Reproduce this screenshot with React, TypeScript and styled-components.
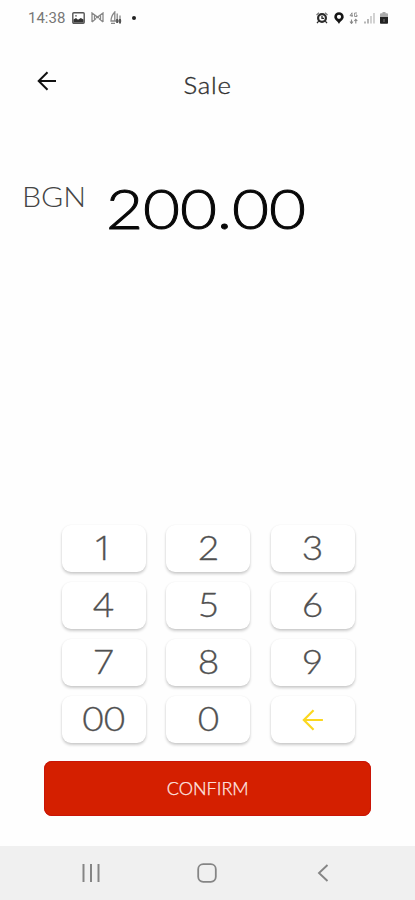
import React from 'react';
import styled, { createGlobalStyle } from 'styled-components';

const GlobalStyle = createGlobalStyle`
  * { box-sizing: border-box; }
  body { margin: 0; background: #fefefe; }
  button { border: 0; padding: 0; margin: 0; background: none; font: inherit; color: inherit; }
  svg { display: block; flex: none; }
`;

const Screen = styled.div`
  width: 415px;
  height: 900px;
  display: flex;
  flex-direction: column;
  background: #fefefe;
  font-family: Lato, 'Open Sans', sans-serif;
  overflow: hidden;
`;

const StatusBar = styled.header`
  height: 35px;
  flex: none;
  display: flex;
  align-items: center;
  justify-content: space-between;
  padding: 0 27px 0 28px;
  color: #555;
`;

const StatusGroup = styled.div<{ $gap: number }>`
  display: flex;
  align-items: center;
  gap: ${(p) => p.$gap}px;
`;

const Clock = styled.span`
  width: 38px;
  font: 400 15px/18px Roboto, sans-serif;
  color: #777;
  white-space: nowrap;
`;

const TitleBar = styled.div`
  height: 100px;
  flex: none;
  display: grid;
  grid-template-columns: 94px 1fr 94px;
  justify-items: center;
`;

const BackButton = styled.button`
  width: 94px;
  height: 91px;
  display: flex;
  align-items: center;
  justify-content: center;
`;

const Title = styled.h1`
  margin: 0;
  padding-top: 36px;
  font: 300 23px/28px Lato, sans-serif;
  letter-spacing: 0.7px;
  color: #303030;
  -webkit-text-stroke: 0.35px #303030;
  transform: scaleX(1.12);
`;

const AmountRow = styled.section`
  height: 390px;
  flex: none;
  display: flex;
  padding-left: 22px;
`;

const Currency = styled.span`
  width: 84px;
  padding-top: 43px;
  font-size: 28px;
  line-height: 36px;
  font-weight: 300;
  color: #444;
  transform: scaleX(1.08);
  transform-origin: left;
`;

const Amount = styled.span`
  padding-top: 38px;
  font-size: 56px;
  line-height: 70px;
  font-weight: 300;
  color: #080808;
  -webkit-text-stroke: 0.9px #080808;
  transform: scaleX(1.14);
  transform-origin: left;
`;

const Keypad = styled.div`
  flex: none;
  display: grid;
  grid-template-columns: repeat(3, 84px);
  grid-auto-rows: 47px;
  gap: 10px 20.6px;
  padding-left: 61.7px;
`;

const Key = styled.button`
  display: flex;
  align-items: center;
  justify-content: center;
  border-radius: 9px;
  background: #fff;
  color: #505050;
  box-shadow: 0 2px 3px rgba(0, 0, 0, 0.2), 0 0 2px rgba(0, 0, 0, 0.05);
`;

const Digit = styled.span<{ $plain: boolean }>`
  font-family: ${(p) => (p.$plain ? "'Open Sans'" : 'Lato')}, sans-serif;
  font-size: 32.5px;
  line-height: 46px;
  font-weight: 300;
  padding-bottom: 2px;
  -webkit-text-stroke: 0.3px #505050;
  transform: scaleX(1.14);
`;

const Confirm = styled.button`
  flex: none;
  width: 327px;
  height: 55px;
  margin: 18px 0 0 44.3px;
  border-radius: 8px;
  background: #d41f00;
  box-shadow: inset 0 0 0 1px #c91507;
  color: #ffe9e4;
  font: 300 17px/55px Lato, sans-serif;
`;

const ConfirmLabel = styled.span`
  display: inline-block;
  -webkit-text-stroke: 0.25px #ffe9e4;
  transform: scaleX(1.06);
`;

const NavBar = styled.nav`
  height: 54px;
  flex: none;
  margin-top: auto;
  display: grid;
  grid-template-columns: repeat(3, 116px);
  justify-content: center;
  align-items: center;
  justify-items: center;
  padding-right: 2px;
  background: #f0f0f0;
`;

const Arrow = ({ color, size }: { color: string; size: number }) => (
  <svg width={size} height={size} viewBox="0 0 20 20" fill="none" stroke={color} strokeWidth="2">
    <path d="M19 10H2M10.5 1.2 1.7 10l8.800 8.800" />
  </svg>
);

const PictureIcon = () => (
  <svg width="13" height="12" viewBox="0 0 13 12">
    <rect x="0.8" y="0.8" width="11.4" height="10.4" rx="1" fill="#fff" stroke="#555" strokeWidth="1.4" />
    <path d="M1.5 10.5V7.5L4 6l2 1.8L8.8 6l2.7 1.5v3z" fill="#333" />
    <circle cx="4" cy="3.8" r="0.9" fill="#666" />
  </svg>
);

const MailIcon = () => (
  <svg width="13" height="11" viewBox="0 0 13 11" fill="none" stroke="#888" strokeWidth="1.3">
    <path d="M1 10V1l5.500 4L12 1v9M1 10l4-3.500M12 10 8 6.500M3.500 3v5M9.500 3v5M5 5.500h3" />
  </svg>
);

const BoatIcon = () => (
  <svg width="12" height="14" viewBox="0 0 12 14" fill="none" stroke="#888" strokeWidth="1.3">
    <path d="M4.800 1C2.500 3.500 1 6.500 1 10h3.800zM7.200 2.500v7M10 4.500V11M4.800 10h6.500M1 12.300h4" />
    <path d="M7.200 8v4M10 8v4.500" stroke="#555" strokeWidth="2" />
  </svg>
);

const Dot = styled.i`
  width: 4px;
  height: 4px;
  margin-left: 4px;
  border-radius: 50%;
  background: #222;
`;

const AlarmIcon = () => (
  <svg width="12" height="12" viewBox="0 0 12 12" fill="none" stroke="#2b2b2b">
    <circle cx="6" cy="6" r="3.900" strokeWidth="2.200" />
    <path d="M6 4v2.300h2M2.700 9.200 1 11.200M9.300 9.200l1.700 2" strokeWidth="1.300" />
    <path d="M0.500 3 3 0.800M11.500 3 9 0.800" stroke="#777" strokeWidth="1.300" />
  </svg>
);

const PinIcon = () => (
  <svg width="10" height="12" viewBox="0 0 10 12">
    <path
      fillRule="evenodd"
      d="M5 .2A4.700 4.700 0 0 0 .3 4.900C.3 7.700 3.800 8.800 5 11.900 6.200 8.800 9.700 7.700 9.700 4.900A4.700 4.700 0 0 0 5 .2zM5 2.700a2.100 2.100 0 1 1 0 4.200 2.100 2.100 0 0 1 0-4.200z"
      fill="#151515"
    />
  </svg>
);

const NetworkIcon = () => (
  <svg width="9" height="12" viewBox="0 0 9 12" fill="none" stroke="#888">
    <path d="M3 5V.8L1 3.700h3M8 1H5.600v3.500H8V3H7" strokeWidth="0.9" />
    <path d="M2.500 11.500V7.500M1 9.500l1.500 2L4 9.500M6.800 7.500v4M5.300 9l1.500-1.700L8.300 9" strokeWidth="1.100" />
  </svg>
);

const SignalIcon = () => (
  <svg width="11" height="12" viewBox="0 0 11 12" strokeWidth="1.400">
    <path d="M1 11.500V9.500M4 11.500V7" stroke="#999" />
    <path d="M7 11.500V4M10 11.500V1" stroke="#c0c0c0" />
  </svg>
);

const BatteryIcon = () => (
  <svg width="8" height="12" viewBox="0 0 8 12">
    <path d="M2.500 0h3v1.200H7q1 0 1 1V6H0V2.200q0-1 1-1h1.500z" fill="#aaa" />
    <path d="M0 5h8v6q0 .8-.8.8H.8Q0 11.800 0 11z" fill="#222" />
    <path d="M4 7v3" stroke="#777" />
  </svg>
);

const keys = ['1', '2', '3', '4', '5', '6', '7', '8', '9', '00', '0'];

export default function App() {
  return (
    <>
      <GlobalStyle />
      <Screen>
        <StatusBar>
          <StatusGroup $gap={6}>
            <Clock>14:38</Clock>
            <PictureIcon />
            <MailIcon />
            <BoatIcon />
            <Dot />
          </StatusGroup>
          <StatusGroup $gap={5.5}>
            <AlarmIcon />
            <PinIcon />
            <NetworkIcon />
            <SignalIcon />
            <BatteryIcon />
          </StatusGroup>
        </StatusBar>
        <TitleBar>
          <BackButton aria-label="Back">
            <Arrow color="#111" size={20} />
          </BackButton>
          <Title>Sale</Title>
        </TitleBar>
        <AmountRow>
          <Currency>BGN</Currency>
          <Amount>200.00</Amount>
        </AmountRow>
        <Keypad>
          {keys.map((k) => (
            <Key key={k}>
              <Digit $plain={k === '1'}>{k}</Digit>
            </Key>
          ))}
          <Key aria-label="Delete">
            <Arrow color="#fbd720" size={22} />
          </Key>
        </Keypad>
        <Confirm>
          <ConfirmLabel>CONFIRM</ConfirmLabel>
        </Confirm>
        <NavBar>
          <svg width="18" height="18" viewBox="0 0 18 18" stroke="#858585" strokeWidth="2">
            <path d="M1.500 0v18M9 0v18M16.500 0v18" />
          </svg>
          <svg width="20" height="20" viewBox="0 0 20 20" fill="none" stroke="#858585" strokeWidth="1.800">
            <rect x="1.200" y="1.200" width="17.600" height="17.600" rx="5" />
          </svg>
          <svg width="12" height="18" viewBox="0 0 12 18" fill="none" stroke="#858585" strokeWidth="1.900">
            <path d="M10.500 1 2 9l8.500 8" />
          </svg>
        </NavBar>
      </Screen>
    </>
  );
}
